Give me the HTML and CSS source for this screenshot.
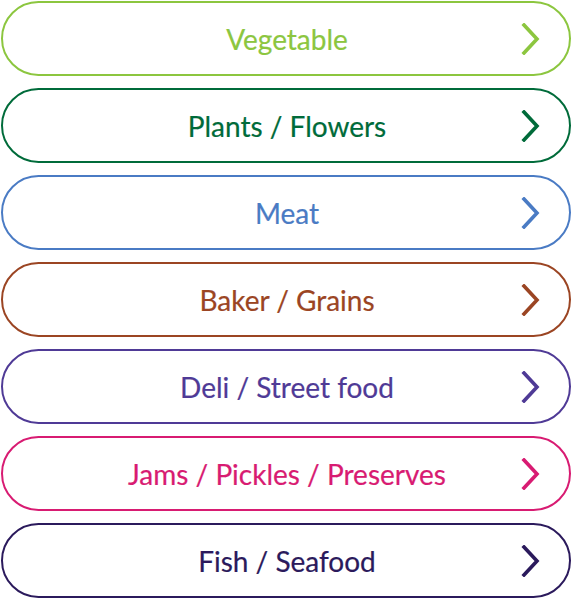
FILE: index.html
```html
<!DOCTYPE html>
<html>
<head>
<meta charset="utf-8">
<link rel="stylesheet" href="styles.css">
</head>
<body>
<nav class="list">
  <a class="item c-veg" href="#"><span class="label">Vegetable</span><svg class="chev" viewBox="0 0 20 32"><path d="M3 2 L16 16 L3 30"/></svg></a>
  <a class="item c-plants" href="#"><span class="label">Plants / Flowers</span><svg class="chev" viewBox="0 0 20 32"><path d="M3 2 L16 16 L3 30"/></svg></a>
  <a class="item c-meat" href="#"><span class="label">Meat</span><svg class="chev" viewBox="0 0 20 32"><path d="M3 2 L16 16 L3 30"/></svg></a>
  <a class="item c-baker" href="#"><span class="label">Baker / Grains</span><svg class="chev" viewBox="0 0 20 32"><path d="M3 2 L16 16 L3 30"/></svg></a>
  <a class="item c-deli" href="#"><span class="label">Deli / Street food</span><svg class="chev" viewBox="0 0 20 32"><path d="M3 2 L16 16 L3 30"/></svg></a>
  <a class="item c-jams" href="#"><span class="label">Jams / Pickles / Preserves</span><svg class="chev" viewBox="0 0 20 32"><path d="M3 2 L16 16 L3 30"/></svg></a>
  <a class="item c-fish" href="#"><span class="label">Fish / Seafood</span><svg class="chev" viewBox="0 0 20 32"><path d="M3 2 L16 16 L3 30"/></svg></a>
</nav>
</body>
</html>
```
FILE: styles.css
```css
html, body {
  margin: 0;
  padding: 0;
  background: #ffffff;
}
body {
  font-family: Lato, "Open Sans", sans-serif;
}
.list {
  display: flex;
  flex-direction: column;
  gap: 12px;
  padding: 1px 0 0 1px;
  width: 570px;
}
.item {
  position: relative;
  display: flex;
  align-items: center;
  justify-content: center;
  box-sizing: border-box;
  height: 75px;
  border: 2.5px solid currentColor;
  border-radius: 38px;
  text-decoration: none;
}
.label {
  font-size: 28px;
  font-weight: 400;
  line-height: 1;
  padding-left: 2px;
  -webkit-text-stroke: 0.2px currentColor;
}
.chev {
  position: absolute;
  right: 28px;
  top: 50%;
  width: 20px;
  height: 32px;
  margin-top: -16px;
}
.chev path {
  fill: none;
  stroke: currentColor;
  stroke-width: 3.6;
  stroke-linecap: square;
  stroke-linejoin: miter;
}
.c-veg { color: #8cc63f; }
.c-plants { color: #006b3a; }
.c-meat { color: #4a7bc4; }
.c-baker { color: #9b4523; }
.c-deli { color: #4f3a96; }
.c-jams { color: #d81b72; }
.c-fish { color: #2b1a5c; }
```
